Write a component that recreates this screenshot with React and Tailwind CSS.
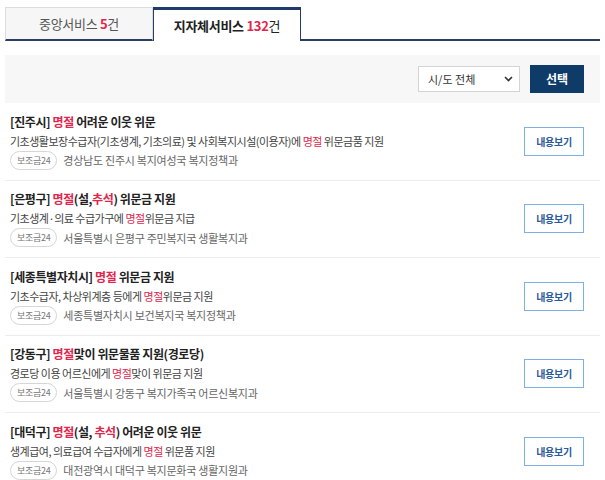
const font = { fontFamily: '"Noto Sans CJK KR", "Noto Sans", sans-serif' };

const items = [
  {
    title: [["[진주시] "], ["명절", true], [" 어려운 이웃 위문"]],
    desc: [["기초생활보장수급자(기초생계, 기초의료) 및 사회복지시설(이용자)에 "], ["명절", true], [" 위문금품 지원"]],
    org: "경상남도 진주시 복지여성국 복지정책과",
  },
  {
    title: [["[은평구] "], ["명절", true], ["(설,"], ["추석", true], [") 위문금 지원"]],
    desc: [["기초생계·의료 수급가구에 "], ["명절", true], ["위문금 지급"]],
    org: "서울특별시 은평구 주민복지국 생활복지과",
  },
  {
    title: [["[세종특별자치시] "], ["명절", true], [" 위문금 지원"]],
    desc: [["기초수급자, 차상위계층 등에게 "], ["명절", true], ["위문금 지원"]],
    org: "세종특별자치시 보건복지국 복지정책과",
  },
  {
    title: [["[강동구] "], ["명절", true], ["맞이 위문물품 지원(경로당)"]],
    desc: [["경로당 이용 어르신에게 "], ["명절", true], ["맞이 위문금 지원"]],
    org: "서울특별시 강동구 복지가족국 어르신복지과",
  },
  {
    title: [["[대덕구] "], ["명절", true], ["(설, "], ["추석", true], [") 어려운 이웃 위문"]],
    desc: [["생계급여, 의료급여 수급자에게 "], ["명절", true], [" 위문품 지원"]],
    org: "대전광역시 대덕구 복지문화국 생활지원과",
  },
];

function Parts({ parts }) {
  return parts.map(([text, hl], i) =>
    hl ? (
      <span key={i} className="text-[#e2264d]">
        {text}
      </span>
    ) : (
      <span key={i}>{text}</span>
    )
  );
}

export default function App() {
  return (
    <div className="w-[605px] h-[480px] overflow-hidden bg-white" style={font}>
      {/* tabs */}
      <div className="flex pl-[5px] pr-[5px] pt-[7px]">
        <div className="w-[148px] h-[34px] flex items-center justify-center bg-[#f6f6f6] border border-[#dcdcdc] border-b-[#2a3d62] border-b-2 text-[13px] text-[#555] tracking-[-0.3px]">
          중앙서비스&nbsp;<span className="text-[#e2264d] font-bold">5</span>건
        </div>
        <div className="w-[148px] h-[34px] flex items-center justify-center bg-white border-x border-[#2a3d62] border-t-[3px] border-t-[#1f3a6b] text-[13px] text-[#222] font-bold tracking-[-0.3px]">
          지자체서비스&nbsp;<span className="text-[#e2264d]">132</span><span className="font-normal">건</span>
        </div>
        <div className="flex-1 border-b-2 border-[#2a3d62]" />
      </div>

      {/* filter */}
      <div className="mt-[14px] ml-[5px] mr-[5px] h-[48px] bg-[#f7f7f7] flex items-center justify-end gap-[10px] pr-[16px]">
        <div className="w-[102px] h-[26px] bg-white border border-[#d4d4d4] flex items-center justify-between pl-[9px] pr-[6px] text-[11px] text-[#333]">
          <span>시/도 전체</span>
          <svg width="9" height="6" viewBox="0 0 9 6">
            <path d="M1 1l3.5 3.5L8 1" fill="none" stroke="#333" strokeWidth="1.6" />
          </svg>
        </div>
        <div className="w-[54px] h-[28px] bg-[#0f3b68] text-white text-[12px] font-bold flex items-center justify-center">
          선택
        </div>
      </div>

      {/* list */}
      <div className="mx-[5px]">
        {items.map((item, i) => (
          <div
            key={i}
            className="h-[77.5px] border-b border-[#ececec] flex items-center justify-between pl-[5px] pr-[16px]"
          >
            <div className="flex flex-col">
              <div className="text-[12px] font-bold text-[#222] leading-[18px] tracking-[-0.4px]">
                <Parts parts={item.title} />
              </div>
              <div className="text-[11px] text-[#444] leading-[18px] mt-[1px] tracking-[-0.5px]">
                <Parts parts={item.desc} />
              </div>
              <div className="flex items-center gap-[6px] mt-[1px]">
                <span className="h-[19px] px-[6px] border border-[#d6d6d6] rounded-full text-[9px] text-[#777] flex items-center tracking-[-0.3px]">
                  보조금24
                </span>
                <span className="text-[11px] text-[#666] tracking-[-0.25px]">{item.org}</span>
              </div>
            </div>
            <div className="w-[60px] h-[29px] border border-[#7fb0e3] text-[#2a5a9a] text-[10px] font-bold flex items-center justify-center tracking-[-0.3px]">
              내용보기
            </div>
          </div>
        ))}
      </div>
    </div>
  );
}
